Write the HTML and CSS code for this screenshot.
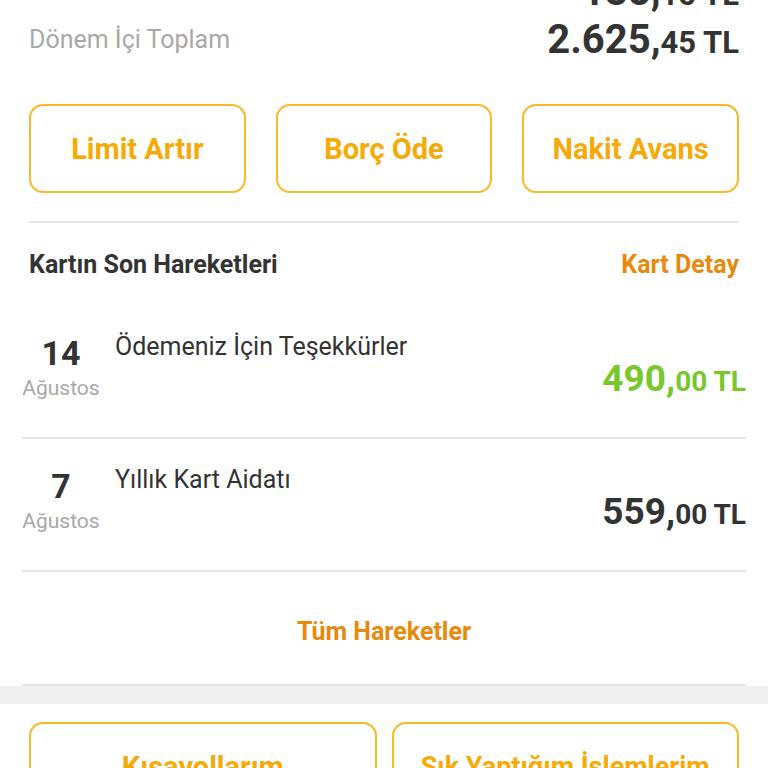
FILE: index.html
```html
<!DOCTYPE html>
<html>
<head>
<title>Kart Özeti</title>
<link rel="stylesheet" href="styles.css">
</head>
<body>

<div id="cardSummary">
  <div class="summary-row cut-off">
    <span class="summary-label">Son Ekstre Borcu</span>
    <span class="amount amount-large">185,<small>15 TL</small></span>
  </div>
  <div class="summary-row">
    <span class="summary-label">Dönem İçi Toplam</span>
    <span class="amount amount-large">2.625,<small>45 TL</small></span>
  </div>

  <div class="actions">
    <button class="action-button">Limit Artır</button>
    <button class="action-button">Borç Öde</button>
    <button class="action-button">Nakit Avans</button>
  </div>

  <div class="section-header">
    <span class="section-title">Kartın Son Hareketleri</span>
    <a class="link">Kart Detay</a>
  </div>
</div>

<div id="transactions">
  <div class="transaction">
    <div class="date">
      <span class="day">14</span>
      <span class="month">Ağustos</span>
    </div>
    <div class="description">Ödemeniz İçin Teşekkürler</div>
    <div class="amount amount-small positive">490,<small>00 TL</small></div>
  </div>
  <div class="transaction">
    <div class="date">
      <span class="day">7</span>
      <span class="month">Ağustos</span>
    </div>
    <div class="description">Yıllık Kart Aidatı</div>
    <div class="amount amount-small">559,<small>00 TL</small></div>
  </div>
  <div class="all-link">
    <a class="link">Tüm Hareketler</a>
  </div>
</div>

<div id="shortcuts">
  <button class="action-button">Kısayollarım</button>
  <button class="action-button long-label">Sık Yaptığım İşlemlerim</button>
</div>

</body>
</html>
```

FILE: styles.css
```css
body {
  margin: 0;
  background-color: #ffffff;
  font-family: Roboto, "Noto Sans", sans-serif;
  color: #333333;
  overflow: hidden;
  height: 768px;
}

#cardSummary {
  padding: 0 29px;
  margin-top: -33px;
}

.summary-row {
  display: flex;
  justify-content: space-between;
  align-items: center;
  height: 48px;
}

.summary-label {
  font-size: 25px;
  color: #a8a8a8;
}

.cut-off .summary-label {
  visibility: hidden;
}

.amount {
  font-weight: bold;
  color: #333333;
  white-space: nowrap;
}

.amount-large {
  font-size: 40px;
}

.amount-large small {
  font-size: 31px;
}

.amount-small {
  font-size: 37px;
}

.amount-small small {
  font-size: 28px;
}

.positive {
  color: #79c72c;
}

.actions {
  display: grid;
  grid-template-columns: repeat(3, 1fr);
  gap: 30px;
  margin-top: 41px;
  padding-bottom: 28px;
  border-bottom: 2px solid #e6e6e6;
}

.action-button {
  height: 89px;
  background-color: #ffffff;
  border: 2px solid #f8b828;
  border-radius: 14px;
  font-family: Roboto, sans-serif;
  font-size: 29px;
  font-weight: bold;
  color: #f6aa08;
  padding: 0;
}

.long-label {
  font-size: 27px;
}

.section-header {
  display: flex;
  justify-content: space-between;
  align-items: center;
  height: 83px;
}

.section-title {
  font-size: 25px;
  font-weight: bold;
}

.link {
  font-size: 25px;
  font-weight: bold;
  color: #e68a0e;
}

#transactions {
  padding: 0 22px;
}

.transaction {
  display: grid;
  grid-template-columns: 78px 1fr auto;
  column-gap: 15px;
  height: 131px;
  border-bottom: 2px solid #e6e6e6;
}

.date {
  display: flex;
  flex-direction: column;
  align-items: center;
  padding-top: 28px;
}

.day {
  font-size: 34px;
  font-weight: bold;
  line-height: 38px;
}

.month {
  font-size: 21px;
  color: #a8a8a8;
  margin-top: 4px;
}

.description {
  font-size: 25px;
  padding-top: 26px;
}

.amount-small {
  align-self: start;
  padding-top: 51px;
}

.all-link {
  display: flex;
  justify-content: center;
  align-items: center;
  height: 114px;
  padding-top: 6px;
  box-sizing: border-box;
  border-bottom: 2px solid #e6e6e6;
}

#shortcuts {
  display: grid;
  grid-template-columns: 1fr 1fr;
  gap: 15px;
  padding: 18px 29px 0;
  border-top: 18px solid #f0f0f0;
}
```
